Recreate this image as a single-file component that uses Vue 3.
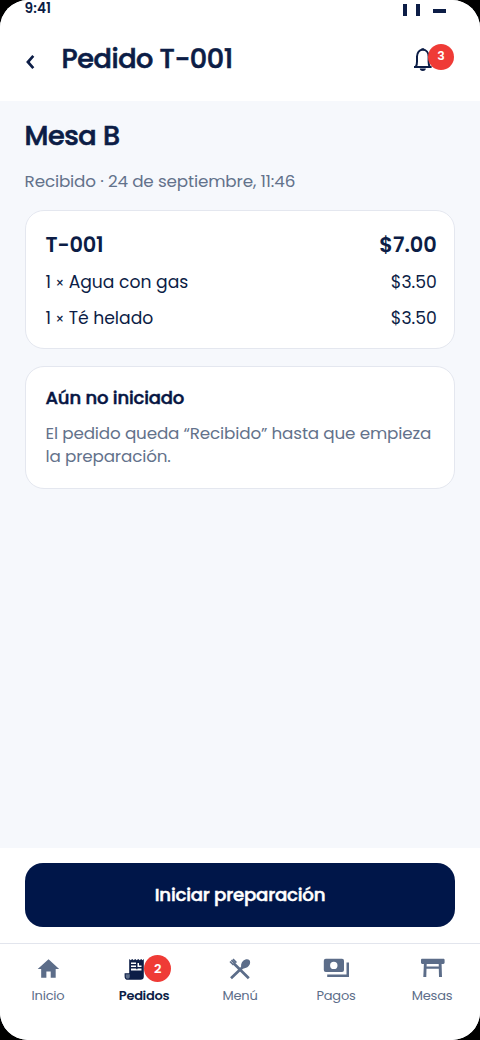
<script setup>
const lines = [
  { name: 'Agua con gas', price: '$3.50' },
  { name: 'Té helado', price: '$3.50' }
]
</script>

<template>
  <div class="screen">
    <div class="status">
      <span class="time">9:41</span>
      <span class="signals"><i></i><i></i><i class="flat"></i></span>
    </div>
    <header class="top">
      <svg class="back" width="12" height="18" viewBox="0 0 12 18"><path d="M9.300 2.900 3.900 9l5.400 6.100" /></svg>
      <h1>Pedido T-001</h1>
      <div class="bell">
        <svg width="20" height="26" viewBox="0 0 20 26">
          <path class="line" d="M1 21h17.600M2.900 20.600C3.700 19.400 4 17.600 4 15.400V10.600C4 6.400 6.500 3.800 9.800 3.800s5.800 2.600 5.800 6.800v4.800c0 2.200.3 4 1.100 5.200" />
          <path class="fill" d="M8.400 2.200h2.800v1.800H8.400zM6.800 22.600h6a3 2.300 0 0 1-6 0z" />
        </svg>
        <span class="badge">3</span>
      </div>
    </header>

    <main>
      <h2>Mesa B</h2>
      <p class="meta">Recibido · 24 de septiembre, 11:46</p>
      <section class="card order">
        <div class="row total"><span class="code">T-001</span><span>$7.00</span></div>
        <div v-for="l in lines" :key="l.name" class="row item">
          <span>1 <span class="times">×</span> {{ l.name }}</span><span>{{ l.price }}</span>
        </div>
      </section>
      <section class="card note">
        <h3>Aún no iniciado</h3>
        <p>El pedido queda “Recibido” hasta que empieza<br />la preparación.</p>
      </section>
    </main>

    <footer>
      <button type="button">Iniciar preparación</button>
    </footer>

    <nav>
      <a>
        <svg width="26" height="26" viewBox="0 0 24 24"><path d="M10.500 20v-5.700h4V20h4.600v-8h3.200L12.500 3 2.500 12h3.200v8z" /></svg>
        <span>Inicio</span>
      </a>
      <a class="active">
        <svg width="20" height="26" viewBox="0 0 20 26">
          <path fill-rule="evenodd" d="M5.200 3l1.500 1.300L8.200 3l1.500 1.300L11.200 3l1.500 1.300L14.200 3l1.500 1.300L17.200 3l1.300 1.200L19.800 3v17.500a3.300 3.300 0 0 1-3.300 3.300H4a3.400 3.400 0 0 1-3.400-3.400V17.200h4.600zM7 6.500v1.500h5V6.500zM7 9.500v1.500h5V9.500zM13.500 7v4h4V9.500h-2.500V7zM7 12.600v1.800h10.500v-1.800h-4v.7h-1.300v-.7z" />
          <path class="roll" d="M1.700 18.300h4.100v2.200c0 1.200-.7 2.200-1.900 2.200-1.300 0-2.200-1-2.200-2.300z" />
        </svg>
        <span>Pedidos</span>
        <b class="badge">2</b>
      </a>
      <a>
        <svg width="22" height="26" viewBox="0 0 22 26">
          <path class="stick" d="M13.800 10.900 2 22.200M4.600 7.200 19.800 22.200" />
          <path class="tine" d="M1 5.500 4.500 9M2.400 4.100l3.400 3.400M4 3.100l3.400 3.500" />
          <path d="M12.500 12.200c-1-2.600-.3-5.500 1.500-7.300 2-2 5-2.300 6.300-.9 1.400 1.400 1.100 4.300-.9 6.300-1.800 1.800-4.300 2.700-6.900 1.900z" />
        </svg>
        <span>Menú</span>
      </a>
      <a>
        <svg width="26" height="26" viewBox="0 0 26 26">
          <path fill-rule="evenodd" d="M2.800 2.700H19a2 2 0 0 1 2 2V14a2 2 0 0 1-2 2H2.800a2 2 0 0 1-2-2V4.700a2 2 0 0 1 2-2zM10.800 5.700a3.700 3.700 0 1 0 0 7.400 3.700 3.700 0 0 0 0-7.400z" />
          <path d="M23.500 6.400H26V21H4.200v-2.400h19.300z" />
        </svg>
        <span>Pagos</span>
      </a>
      <a>
        <svg width="26" height="26" viewBox="0 0 26 26">
          <path fill-rule="evenodd" d="M3.300 2.700h21c.8 0 1.300.5 1.300 1.300v2.600c0 .8-.5 1.300-1.300 1.300h-1.700l.4 13.200h-3l-.2-8.400H7.500l-.2 8.400h-3L4.900 7.900H3.300C2.500 7.900 2 7.400 2 6.600V4c0-.8.5-1.300 1.300-1.300zM7.700 7.900l-.1 2.500h12.200l-.1-2.500z" />
        </svg>
        <span>Mesas</span>
      </a>
    </nav>
  </div>
</template>

<style>
html, body { margin: 0; background: #000; }
</style>

<style scoped>
* { box-sizing: border-box; margin: 0; }
.screen {
  width: 480px; height: 1040px; display: flex; flex-direction: column;
  background: #f6f8fc; border-radius: 28px; overflow: hidden; color: #0c1d46;
  font-family: Poppins, Inter, sans-serif; white-space: nowrap;
}
.status { height: 20px; background: #fff; display: flex; justify-content: space-between; padding: 0 34px 0 24.600px; }
.time { font-size: 13.700px; letter-spacing: 0.100px; font-weight: 600; line-height: 17px; }
.signals { display: flex; align-items: flex-start; padding-top: 4px; }
.signals i { width: 4px; height: 12px; margin-right: 8.400px; background: #0c1d46; }
.signals i.flat { width: 13px; height: 4px; margin: 5px 0 0 5px; }
.top { height: 81px; background: #fff; display: flex; padding: 0 26px 0 24px; }
.back { margin-top: 33px; fill: none; stroke: #0c1d46; stroke-width: 2.700; }
h1, h2, h3, button { -webkit-text-stroke: 0.500px currentColor; }
h1, h2 { -webkit-text-stroke-width: 0.650px; }
h1 { margin-left: 25.600px; flex: 1; font-size: 27.100px; letter-spacing: -0.440px; font-weight: 500; line-height: 39px; padding-top: 19px; }
.bell { display: flex; padding-top: 26px; }
.line { fill: none; stroke: #0c1d46; stroke-width: 2; }
.fill { fill: #0c1d46; }
.badge {
  width: 27px; height: 27px; border-radius: 50%; background: #ef3b36; color: #fff;
  font-size: 12.500px; font-weight: 600; line-height: 24px; text-align: center;
}
.bell .badge { margin: -2.500px 0 0 -5px; height: 26px; width: 26px; }
.bell svg { margin-left: -1px; }
main { flex: 1; padding: 0 24.600px; }
h2 { font-size: 27.100px; letter-spacing: -0.440px; font-weight: 500; line-height: 38px; padding-top: 16px; }
.meta { font-size: 16.800px; letter-spacing: -0.150px; line-height: 24px; margin: 14px 0 17px; color: #63728b; }
.card { background: #fff; border: 1px solid #e4e7ef; border-radius: 19px; padding: 0 17.600px 0 19.900px; }
.order { height: 139px; padding-top: 16px; }
.row { display: flex; justify-content: space-between; }
.total { font-size: 20.900px; font-weight: 600; line-height: 36px; }
.code { letter-spacing: -0.150px; }
.item { font-size: 17.200px; line-height: 36px; margin-top: 1px; }
.item + .item { margin-top: 0; }
.times { display: inline-block; width: 8.500px; font-size: 13.500px; text-align: center; line-height: 20px; }
.note { height: 123px; margin-top: 17px; padding-top: 18px; }
h3 { font-size: 18px; letter-spacing: -0.160px; font-weight: 500; line-height: 26px; color: #061543; }
.note p { font-size: 16.800px; letter-spacing: -0.160px; line-height: 23px; color: #63728b; margin-top: 11px; }
footer { height: 95px; background: #fff; padding: 14.500px 24.600px 0; }
button {
  display: block; width: 100%; height: 64px; border: 0; padding: 0; border-radius: 18px; background: #001649;
  color: #fff; font: 500 18.200px/61px Poppins, Inter, sans-serif; letter-spacing: -0.230px;
}
nav { height: 97px; background: #fff; border-top: 1px solid #e2e5ed; display: flex; }
a { position: relative; width: 96px; height: 62px; padding-top: 12px; display: flex; flex-direction: column; align-items: center; color: #5c6d89; font-size: 13px; letter-spacing: -0.200px; }
a svg { fill: currentColor; height: 26px; flex: none; }
a > span { line-height: 18px; margin-top: 4.500px; }
.stick, .tine { fill: none; stroke: currentColor; stroke-width: 2.700; }
.tine { stroke-width: 1.600; }
.active { color: #0c1d46; font-weight: 600; letter-spacing: -0.320px; }
.active svg { margin-right: 20px; }
.roll { fill: #5c6d89; }
.active .badge { position: absolute; left: 48px; top: 11px; line-height: 27px; font-size: 13px; }
</style>
